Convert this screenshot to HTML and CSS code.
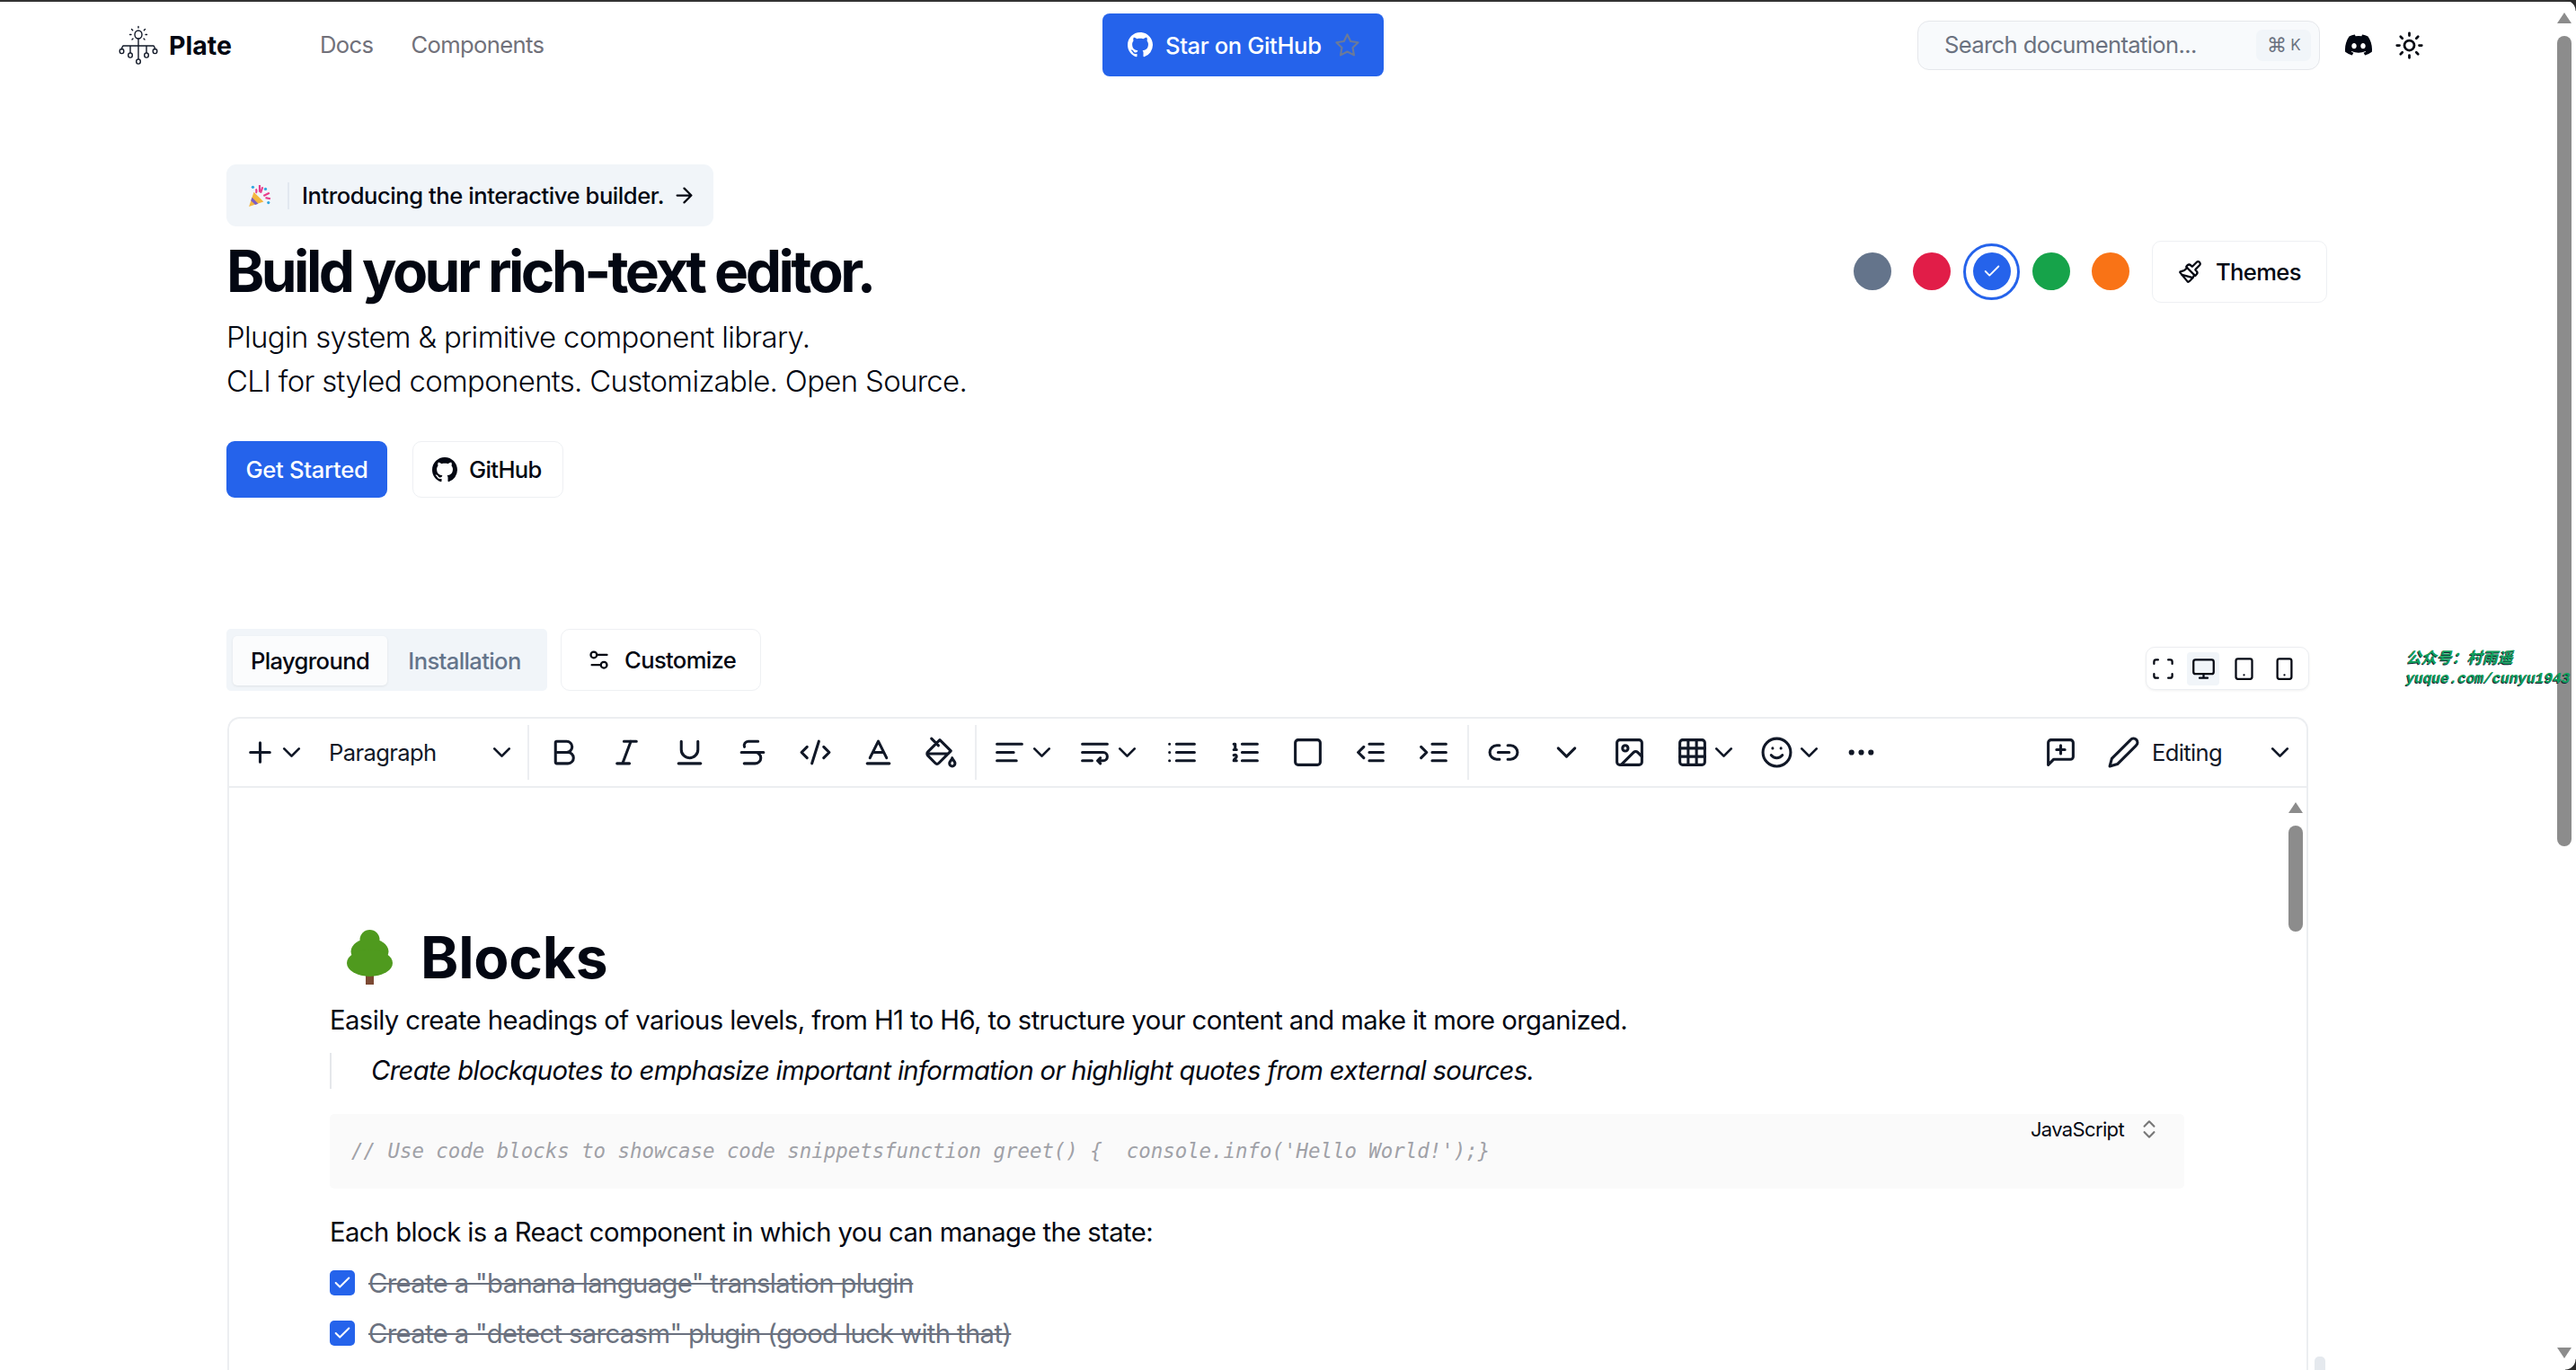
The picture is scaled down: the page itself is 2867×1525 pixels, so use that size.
FILE: index.html
```html
<!DOCTYPE html>
<html lang="en">
<head>
  <meta charset="UTF-8">
  <title>Plate</title>
  <link rel="stylesheet" href="styles.css">
</head>
<body>
  <header class="site-header">
    <div class="brand-nav">
      <a class="brand">
        <svg class="logo" viewBox="0 0 44 44" fill="none" stroke="#111827" stroke-width="1.4" stroke-linecap="round">
          <ellipse cx="22" cy="10.5" rx="4" ry="4.5"/>
          <path d="M22 1.5v1.5M14.5 4.5l1.2 1.2M29.5 4.5l-1.2 1.2M12.5 10.5h1.5M30 10.5h1.5M15 16l1-1M29 16l-1-1"/>
          <path d="M22 15v23M5 23h34M5 23c-1 1-1.500 2-1.500 4M39 23c1 1 1.500 2 1.500 4M13 23v8M31 23v8"/>
          <ellipse cx="3.500" cy="29" rx="2.300" ry="2.600"/>
          <ellipse cx="40.500" cy="29" rx="2.300" ry="2.600"/>
          <ellipse cx="13" cy="33.500" rx="2.300" ry="2.600"/>
          <ellipse cx="31" cy="33.500" rx="2.300" ry="2.600"/>
          <ellipse cx="22" cy="40.500" rx="2.300" ry="2.600"/>
        </svg>
        <span class="brand-name">Plate</span>
      </a>
      <nav class="main-nav">
        <a>Docs</a>
        <a>Components</a>
      </nav>
    </div>
    <a class="star-btn">
      <svg class="gh" viewBox="0 0 16 16" fill="#fff"><path d="M8 0C3.58 0 0 3.58 0 8c0 3.540 2.290 6.530 5.470 7.590.4.070.55-.17.55-.38 0-.19-.01-.82-.01-1.490-2.010.37-2.530-.49-2.690-.94-.09-.23-.48-.94-.82-1.130-.28-.15-.68-.52-.01-.53.63-.01 1.080.58 1.230.82.72 1.210 1.870.87 2.330.66.07-.52.28-.87.51-1.070-1.780-.2-3.640-.89-3.640-3.950 0-.87.31-1.590.82-2.150-.08-.2-.36-1.020.08-2.120 0 0 .67-.21 2.200.82.64-.18 1.320-.27 2-.27.68 0 1.360.09 2 .27 1.530-1.040 2.200-.82 2.200-.82.44 1.100.16 1.920.08 2.120.51.56.82 1.270.82 2.150 0 3.070-1.870 3.750-3.650 3.950.29.25.54.73.54 1.480 0 1.070-.01 1.930-.01 2.200 0 .21.15.46.55.38A8.013 8.013 0 0 0 16 8c0-4.420-3.580-8-8-8z"/></svg>
      <span>Star on GitHub</span>
      <svg class="star" viewBox="0 0 24 24" fill="none" stroke="#6b7a99" stroke-width="1.800" stroke-linejoin="round"><polygon points="12 2 15.090 8.260 22 9.270 17 14.140 18.180 21.020 12 17.770 5.820 21.020 7 14.140 2 9.270 8.910 8.260"/></svg>
    </a>
    <div class="search">
      <span class="search-text">Search documentation...</span>
      <kbd><span class="cmd">⌘</span> K</kbd>
    </div>
    <a class="head-icon">
      <svg class="discord" viewBox="0 0 24 24" fill="#030712"><path d="M20.317 4.370a19.791 19.791 0 0 0-4.885-1.515.074.074 0 0 0-.079.037c-.21.375-.444.864-.608 1.250a18.270 18.270 0 0 0-5.487 0 12.640 12.640 0 0 0-.617-1.250.077.077 0 0 0-.079-.037A19.736 19.736 0 0 0 3.677 4.370a.07.07 0 0 0-.032.027C.533 9.046-.32 13.580.099 18.057a.082.082 0 0 0 .031.057 19.900 19.900 0 0 0 5.993 3.030.078.078 0 0 0 .084-.028 14.090 14.090 0 0 0 1.226-1.994.076.076 0 0 0-.041-.106 13.107 13.107 0 0 1-1.872-.892.077.077 0 0 1-.008-.128 10.200 10.200 0 0 0 .372-.292.074.074 0 0 1 .077-.01c3.928 1.793 8.180 1.793 12.062 0a.074.074 0 0 1 .078.01c.12.098.246.198.373.292a.077.077 0 0 1-.006.127 12.299 12.299 0 0 1-1.873.892.077.077 0 0 0-.041.107c.36.698.772 1.362 1.225 1.993a.076.076 0 0 0 .084.028 19.839 19.839 0 0 0 6.002-3.030.077.077 0 0 0 .032-.054c.5-5.177-.838-9.674-3.549-13.660a.061.061 0 0 0-.031-.03zM8.020 15.330c-1.183 0-2.157-1.085-2.157-2.419 0-1.333.956-2.419 2.157-2.419 1.210 0 2.176 1.096 2.157 2.420 0 1.333-.956 2.418-2.157 2.418zm7.975 0c-1.183 0-2.157-1.085-2.157-2.419 0-1.333.955-2.419 2.157-2.419 1.210 0 2.176 1.096 2.157 2.420 0 1.333-.946 2.418-2.157 2.418Z"/></svg>
    </a>
    <a class="head-icon">
      <svg class="ic" viewBox="0 0 24 24"><circle cx="12" cy="12" r="4"/><path d="M12 2v2M12 20v2M4.930 4.930l1.410 1.410M17.660 17.660l1.410 1.410M2 12h2M20 12h2M6.340 17.660l-1.410 1.410M19.070 4.930l-1.410 1.410"/></svg>
    </a>
  </header>

  <section class="hero">
    <a class="announce">
      <svg class="popper" viewBox="0 0 24 24">
        <path d="M1 23 6 8l10 10z" fill="#f4b63f"/>
        <path d="M4.200 13.500 10.500 20l-3 1.200-4.500-4.400z" fill="#7a5dc7"/>
        <path d="M8 5c1 1 1 3 0 4M12 1v7M15 3l-2 6M22 9l-6 3M23 15l-5-1" stroke="#e83e8c" stroke-width="2" fill="none"/>
        <circle cx="18" cy="5" r="1.500" fill="#2fa7e0"/>
        <circle cx="21" cy="19" r="1.500" fill="#2fa7e0"/>
        <circle cx="5" cy="3" r="1.500" fill="#2fa7e0"/>
      </svg>
      <span class="announce-sep"></span>
      <span>Introducing the interactive builder.</span>
      <svg class="ic arrow" viewBox="0 0 24 24"><path d="M5 12h14M12 5l7 7-7 7"/></svg>
    </a>
    <div class="title-row">
      <h1>Build your rich-text editor.</h1>
      <div class="themes">
        <span class="swatch slate"></span>
        <span class="swatch rose"></span>
        <span class="swatch-ring">
          <span class="swatch blue">
            <svg viewBox="0 0 24 24" fill="none" stroke="#fff" stroke-width="2" stroke-linecap="round" stroke-linejoin="round"><path d="M20 6 9 17l-5-5"/></svg>
          </span>
        </span>
        <span class="swatch green"></span>
        <span class="swatch orange"></span>
        <a class="btn-outline themes-btn">
          <svg class="ic" viewBox="0 0 24 24"><path d="m14.622 17.897-10.680-2.913"/><path d="M18.376 2.622a1 1 0 1 1 3.002 3.002L17.360 9.643a.5.5 0 0 0 0 .707l.944.944a2.410 2.410 0 0 1 0 3.408l-.944.944a.5.5 0 0 1-.707 0L8.354 7.348a.5.5 0 0 1 0-.707l.944-.944a2.410 2.410 0 0 1 3.408 0l.944.944a.5.5 0 0 0 .707 0z"/><path d="M9 8c-1.804 2.710-3.970 3.460-6.583 3.948a.507.507 0 0 0-.302.819l7.320 8.883a1 1 0 0 0 1.185.204C12.735 20.405 16 16.792 16 15"/></svg>
          <span>Themes</span>
        </a>
      </div>
    </div>
    <p class="lead">Plugin system &amp; primitive component library.<br>CLI for styled components. Customizable. Open Source.</p>
    <div class="hero-actions">
      <a class="btn-primary">Get Started</a>
      <a class="btn-outline github-btn">
        <svg class="gh" viewBox="0 0 16 16" fill="#030712"><path d="M8 0C3.58 0 0 3.58 0 8c0 3.540 2.290 6.530 5.470 7.590.4.070.55-.17.55-.38 0-.19-.01-.82-.01-1.490-2.010.37-2.530-.49-2.690-.94-.09-.23-.48-.94-.82-1.130-.28-.15-.68-.52-.01-.53.63-.01 1.080.58 1.230.82.72 1.210 1.870.87 2.330.66.07-.52.28-.87.51-1.070-1.780-.2-3.640-.89-3.640-3.950 0-.87.31-1.590.82-2.150-.08-.2-.36-1.020.08-2.120 0 0 .67-.21 2.200.82.64-.18 1.320-.27 2-.27.68 0 1.360.09 2 .27 1.530-1.040 2.200-.82 2.200-.82.44 1.100.16 1.920.08 2.120.51.56.82 1.270.82 2.150 0 3.070-1.870 3.750-3.650 3.950.29.25.54.73.54 1.480 0 1.070-.01 1.930-.01 2.200 0 .21.15.46.55.38A8.013 8.013 0 0 0 16 8c0-4.420-3.580-8-8-8z"/></svg>
        <span>GitHub</span>
      </a>
    </div>
  </section>

  <section class="playground">
    <div class="tabs-row">
      <div class="tabs">
        <a class="tab active">Playground</a>
        <a class="tab">Installation</a>
      </div>
      <a class="btn-outline customize-btn">
        <svg class="ic" viewBox="0 0 24 24"><path d="M20 7h-9M14 17H5"/><circle cx="17" cy="17" r="3"/><circle cx="7" cy="7" r="3"/></svg>
        <span>Customize</span>
      </a>
      <div class="viewport-switch">
        <a class="vp"><svg class="ic" viewBox="0 0 24 24"><path d="M3 7V5a2 2 0 0 1 2-2h2M17 3h2a2 2 0 0 1 2 2v2M21 17v2a2 2 0 0 1-2 2h-2M7 21H5a2 2 0 0 1-2-2v-2"/></svg></a>
        <a class="vp active"><svg class="ic" viewBox="0 0 24 24"><rect x="2" y="3" width="20" height="14" rx="2"/><path d="M8 21h8M12 17v4"/></svg></a>
        <a class="vp"><svg class="ic" viewBox="0 0 24 24"><rect x="4" y="2" width="16" height="20" rx="2"/><path d="M12 18h.01"/></svg></a>
        <a class="vp"><svg class="ic" viewBox="0 0 24 24"><rect x="5" y="2" width="14" height="20" rx="2"/><path d="M12 18h.01"/></svg></a>
      </div>
    </div>

    <div class="editor">
      <div class="toolbar">
        <div class="tb-group w-insert">
          <svg class="ic" viewBox="0 0 24 24"><path d="M5 12h14M12 5v14"/></svg>
          <svg class="ic chev" viewBox="0 0 24 24"><path d="m6 9 6 6 6-6"/></svg>
        </div>
        <div class="tb-select">
          <span>Paragraph</span>
          <svg class="ic chev" viewBox="0 0 24 24"><path d="m6 9 6 6 6-6"/></svg>
        </div>
        <span class="tb-sep"></span>
        <div class="tb-btn"><svg class="ic" viewBox="0 0 24 24"><path d="M6 12h9a4 4 0 0 1 0 8H7a1 1 0 0 1-1-1V5a1 1 0 0 1 1-1h7a4 4 0 0 1 0 8"/></svg></div>
        <div class="tb-btn"><svg class="ic" viewBox="0 0 24 24"><path d="M19 4h-9M14 20H5M15 4 9 20"/></svg></div>
        <div class="tb-btn"><svg class="ic" viewBox="0 0 24 24"><path d="M6 4v6a6 6 0 0 0 12 0V4M4 20h16"/></svg></div>
        <div class="tb-btn"><svg class="ic" viewBox="0 0 24 24"><path d="M16 4H9a3 3 0 0 0-2.830 4M14 12a4 4 0 0 1 0 8H6M4 12h16"/></svg></div>
        <div class="tb-btn"><svg class="ic" viewBox="0 0 24 24"><path d="m18 16 4-4-4-4M6 8l-4 4 4 4M14.500 4l-5 16"/></svg></div>
        <div class="tb-btn"><svg class="ic" viewBox="0 0 24 24"><path d="M4 20h16M6 16l6-12 6 12M8 12h8"/></svg></div>
        <div class="tb-btn"><svg class="ic" viewBox="0 0 24 24"><path d="m19 11-8-8-8.600 8.600a2 2 0 0 0 0 2.800l5.200 5.200c.8.8 2 .8 2.800 0L19 11ZM5 2l5 5M2 13h15M22 20a2 2 0 1 1-4 0c0-1.600 1.700-2.400 2-4 .3 1.600 2 2.400 2 4Z"/></svg></div>
        <span class="tb-sep"></span>
        <div class="tb-group w-align">
          <svg class="ic" viewBox="0 0 24 24"><path d="M21 6H3M15 12H3M17 18H3"/></svg>
          <svg class="ic chev" viewBox="0 0 24 24"><path d="m6 9 6 6 6-6"/></svg>
        </div>
        <div class="tb-group w-wrap">
          <svg class="ic" viewBox="0 0 24 24"><path d="M3 6h18M3 12h15a3 3 0 1 1 0 6h-4M16 16l-2 2 2 2M3 18h7"/></svg>
          <svg class="ic chev" viewBox="0 0 24 24"><path d="m6 9 6 6 6-6"/></svg>
        </div>
        <div class="tb-btn"><svg class="ic" viewBox="0 0 24 24"><path d="M8 6h13M8 12h13M8 18h13M3 6h.01M3 12h.01M3 18h.01"/></svg></div>
        <div class="tb-btn"><svg class="ic" viewBox="0 0 24 24"><path d="M10 6h11M10 12h11M10 18h11M4 6h1v4M4 10h2M6 18H4c0-1 2-2 2-3s-1-1.500-2-1"/></svg></div>
        <div class="tb-btn"><svg class="ic" viewBox="0 0 24 24"><rect x="3" y="3" width="18" height="18" rx="2"/></svg></div>
        <div class="tb-btn"><svg class="ic" viewBox="0 0 24 24"><path d="M7 8l-4 4 4 4M21 12H11M21 6H11M21 18H11"/></svg></div>
        <div class="tb-btn"><svg class="ic" viewBox="0 0 24 24"><path d="M3 8l4 4-4 4M21 12H11M21 6H11M21 18H11"/></svg></div>
        <span class="tb-sep"></span>
        <div class="tb-btn"><svg class="ic" viewBox="0 0 24 24"><path d="M9 17H7A5 5 0 0 1 7 7h2M15 7h2a5 5 0 1 1 0 10h-2M8 12h8"/></svg></div>
        <div class="tb-btn"><svg class="ic" viewBox="0 0 24 24"><path d="m6 9 6 6 6-6"/></svg></div>
        <div class="tb-btn"><svg class="ic" viewBox="0 0 24 24"><rect x="3" y="3" width="18" height="18" rx="2"/><circle cx="9" cy="9" r="2"/><path d="m21 15-3.086-3.086a2 2 0 0 0-2.828 0L6 21"/></svg></div>
        <div class="tb-group w-table">
          <svg class="ic" viewBox="0 0 24 24"><rect x="3" y="3" width="18" height="18" rx="2"/><path d="M3 9h18M3 15h18M9 3v18M15 3v18"/></svg>
          <svg class="ic chev" viewBox="0 0 24 24"><path d="m6 9 6 6 6-6"/></svg>
        </div>
        <div class="tb-group w-emoji">
          <svg class="ic" viewBox="0 0 24 24"><circle cx="12" cy="12" r="10"/><path d="M8 14s1.500 2 4 2 4-2 4-2M9 9h.01M15 9h.01"/></svg>
          <svg class="ic chev" viewBox="0 0 24 24"><path d="m6 9 6 6 6-6"/></svg>
        </div>
        <div class="tb-btn"><svg class="ic" viewBox="0 0 24 24"><circle cx="5" cy="12" r="1"/><circle cx="12" cy="12" r="1"/><circle cx="19" cy="12" r="1"/></svg></div>
        <div class="tb-right">
          <div class="tb-btn"><svg class="ic" viewBox="0 0 24 24"><path d="M21 15a2 2 0 0 1-2 2H7l-4 4V5a2 2 0 0 1 2-2h14a2 2 0 0 1 2 2zM12 7v6M9 10h6"/></svg></div>
          <div class="tb-mode">
            <svg class="ic" viewBox="0 0 24 24"><path d="M17 3a2.850 2.830 0 1 1 4 4L7.500 20.500 2 22l1.500-5.500Z"/></svg>
            <span>Editing</span>
            <svg class="ic chev" viewBox="0 0 24 24"><path d="m6 9 6 6 6-6"/></svg>
          </div>
        </div>
      </div>

      <div class="doc">
        <h2 class="doc-title">
          <svg class="tree" viewBox="0 0 51 61">
            <rect x="21" y="46" width="9" height="15" fill="#7c4a33"/>
            <ellipse cx="25.500" cy="11" rx="11" ry="11" fill="#4f9a1e"/>
            <ellipse cx="25.500" cy="24" rx="21" ry="14" fill="#4f9a1e"/>
            <ellipse cx="25.500" cy="37" rx="25.500" ry="15" fill="#4f9a1e"/>
          </svg>
          <span>Blocks</span>
        </h2>
        <p class="doc-p">Easily create headings of various levels, from H1 to H6, to structure your content and make it more organized.</p>
        <blockquote>Create blockquotes to emphasize important information or highlight quotes from external sources.</blockquote>
        <div class="code-block">
          <code>// Use code blocks to showcase code snippetsfunction greet() {  console.info('Hello World!');}</code>
          <span class="lang">JavaScript
            <svg class="ic" viewBox="0 0 24 24"><path d="m7 15 5 5 5-5M7 9l5-5 5 5"/></svg>
          </span>
        </div>
        <p class="doc-p after-code">Each block is a React component in which you can manage the state:</p>
        <div class="todo">
          <span class="check"><svg viewBox="0 0 24 24" fill="none" stroke="#fff" stroke-width="2.200" stroke-linecap="round" stroke-linejoin="round"><path d="M20 6 9 17l-5-5"/></svg></span>
          <s>Create a "banana language" translation plugin</s>
        </div>
        <div class="todo">
          <span class="check"><svg viewBox="0 0 24 24" fill="none" stroke="#fff" stroke-width="2.200" stroke-linecap="round" stroke-linejoin="round"><path d="M20 6 9 17l-5-5"/></svg></span>
          <s>Create a "detect sarcasm" plugin (good luck with that)</s>
        </div>
      </div>

      <!-- editor scrollbar -->
      <div class="editor-scroll">
        <span class="arrow-up"></span>
        <span class="thumb"></span>
      </div>
    </div>
  </section>

  <!-- window edge, page scrollbar, watermark -->
  <div class="window-line"></div>
  <div class="corner top"></div>
  <div class="corner bottom"></div>
  <div class="page-scroll">
    <span class="arrow-up"></span>
    <span class="thumb"></span>
    <span class="arrow-down"></span>
  </div>
  <span class="scroll-blob"></span>
  <div class="watermark"><span class="wm-cjk">公众号：村雨遥</span><br>yuque.com/cunyu1943</div>
</body>
</html>
```

FILE: styles.css
```css
* {
  box-sizing: border-box;
}
html, body {
  height: 1525px;
  overflow: hidden;
}
body {
  margin: 0;
  position: relative;
  background: #fff;
  color: #030712;
  font-family: Inter, "Noto Sans", sans-serif;
  font-size: 25.6px;
  letter-spacing: -0.64px;
}
.ic {
  width: 29px;
  height: 29px;
  flex: none;
  fill: none;
  stroke: currentColor;
  stroke-width: 2;
  stroke-linecap: round;
  stroke-linejoin: round;
}

/* Header */
.site-header {
  height: 100px;
  display: flex;
  align-items: center;
  padding-left: 132px;
}
.brand-nav {
  width: 1095px;
  display: flex;
  align-items: center;
}
.brand {
  width: 224px;
  display: flex;
  align-items: center;
  gap: 12px;
}
.logo {
  width: 44px;
  height: 44px;
}
.brand-name {
  font-size: 28.5px;
  font-weight: 700;
  letter-spacing: 0;
}
.main-nav {
  display: flex;
  gap: 42px;
  padding-bottom: 2px;
  color: #71717a;
}
.star-btn {
  width: 313px;
  height: 70px;
  display: flex;
  align-items: center;
  padding-left: 28px;
  gap: 14px;
  background: #2563eb;
  color: #fff;
  font-weight: 500;
  letter-spacing: -0.38px;
  border-radius: 8px;
}
.star-btn .gh {
  width: 28px;
  height: 28px;
}
.star {
  width: 29px;
  height: 29px;
}
.search {
  width: 448px;
  height: 55px;
  margin-left: 594px;
  margin-right: 14px;
  padding: 0 9px 0 29px;
  display: flex;
  align-items: center;
  justify-content: space-between;
  background: #f8fafc;
  border: 1.500px solid #e5e7eb;
  border-radius: 13px;
  color: #6b7280;
}
.search-text {
  padding-bottom: 2px;
}
kbd {
  width: 61px;
  height: 35px;
  display: flex;
  align-items: center;
  justify-content: center;
  gap: 5px;
  background: #f1f5f9;
  border-radius: 7px;
  color: #6b7280;
  font-family: Inter, sans-serif;
  font-size: 17px;
}
.cmd {
  font-family: "DejaVu Sans", sans-serif;
  font-size: 22px;
}
.head-icon {
  display: flex;
  align-items: center;
  justify-content: center;
  width: 57px;
}
.head-icon .ic {
  width: 33px;
  height: 33px;
}
.discord {
  width: 30px;
  height: 30px;
}

/* Hero */
.hero {
  padding: 83px 277px 0 252px;
}
.announce {
  width: 542px;
  height: 69px;
  display: flex;
  align-items: center;
  padding-left: 24px;
  background: #f1f5f9;
  border-radius: 11px;
  font-weight: 500;
  letter-spacing: -0.45px;
  white-space: nowrap;
}
.popper {
  width: 26px;
  height: 26px;
}
.announce-sep {
  width: 2px;
  height: 30px;
  margin: 0 14px 0 18px;
  background: #e2e8f0;
}
.arrow {
  width: 27px;
  height: 27px;
  margin-left: 9px;
}
.title-row {
  height: 74px;
  margin-top: 13px;
  display: flex;
  align-items: center;
  justify-content: space-between;
}
h1 {
  margin: 0;
  font-size: 64px;
  font-weight: 700;
  letter-spacing: -3.550px;
  line-height: 74px;
}
.themes {
  display: flex;
  align-items: center;
}
.swatch {
  width: 42px;
  height: 42px;
  border-radius: 50%;
  margin-right: 24px;
  display: flex;
  align-items: center;
  justify-content: center;
}
.swatch svg {
  width: 22px;
  height: 22px;
}
.slate { background: #64748b; }
.rose { background: #e11d48; margin-right: 14px; }
.blue { background: #2563eb; margin: 0; }
.green { background: #16a34a; }
.orange { background: #f97316; margin-right: 25px; }
.swatch-ring {
  width: 63px;
  height: 63px;
  margin-right: 14px;
  border: 3.500px solid #2563eb;
  border-radius: 50%;
  display: flex;
  align-items: center;
  justify-content: center;
}
.btn-outline {
  display: flex;
  align-items: center;
  background: #fff;
  border: 1.500px solid #eef0f3;
  border-radius: 10px;
  font-weight: 500;
}
.themes-btn {
  width: 195px;
  height: 69px;
  padding-left: 28px;
  gap: 15px;
}
.themes-btn .ic {
  width: 27px;
  height: 27px;
}
.lead {
  margin: 12px 0 0;
  font-size: 32.900px;
  font-weight: 300;
  letter-spacing: -0.650px;
  line-height: 49px;
}
.hero-actions {
  margin-top: 42px;
  display: flex;
  gap: 28px;
}
.btn-primary {
  width: 179px;
  height: 63px;
  display: flex;
  align-items: center;
  justify-content: center;
  background: #2563eb;
  color: #fff;
  font-weight: 500;
  letter-spacing: -0.3px;
  border-radius: 9px;
}
.github-btn {
  width: 168px;
  height: 63px;
  padding-left: 21px;
  gap: 13px;
}
.github-btn .gh {
  width: 28px;
  height: 28px;
}

/* Playground */
.playground {
  padding: 146px 297px 0 252px;
}
.tabs-row {
  height: 70px;
  display: flex;
  gap: 15px;
}
.tabs {
  width: 357px;
  height: 69px;
  padding: 8px 6px 8px 7px;
  display: flex;
  background: #f1f5f9;
  border-radius: 5px;
  font-weight: 500;
  color: #64748b;
}
.tab {
  height: 55px;
  display: flex;
  align-items: center;
  justify-content: center;
  width: 172px;
}
.tab.active {
  background: #fbfcfd;
  color: #030712;
  border-radius: 5px;
  box-shadow: 0 1px 3px rgba(0, 0, 0, 0.08);
}
.customize-btn {
  width: 223px;
  height: 69px;
  padding-left: 28px;
  gap: 15px;
}
.customize-btn .ic {
  width: 27px;
  height: 27px;
}
.viewport-switch {
  width: 182px;
  height: 48px;
  margin: 20px 0 0 auto;
  display: flex;
  align-items: center;
  gap: 9.300px;
  background: #fff;
  border: 1.500px solid #eceef1;
  border-radius: 10px;
  box-shadow: 0 1px 3px rgba(0, 0, 0, 0.06);
}
.vp {
  width: 36px;
  height: 37px;
  display: flex;
  align-items: center;
  justify-content: center;
  border-radius: 4px;
}
.vp .ic {
  width: 27px;
  height: 27px;
}
.vp.active {
  background: #f1f5f9;
}

.editor {
  position: relative;
  width: 2316px;
  height: 727px;
  margin-top: 28px;
  margin-left: 1px;
  border: 2px solid #eceef1;
  border-bottom: none;
  border-radius: 14px 14px 0 0;
  overflow: hidden;
}
.toolbar {
  height: 77px;
  padding-left: 8px;
  display: flex;
  align-items: center;
  border-bottom: 2px solid #eceef1;
  color: #111827;
}
.toolbar .ic {
  width: 37px;
  height: 37px;
}
.toolbar .chev {
  width: 33px;
  height: 33px;
}
.tb-btn, .tb-group {
  height: 60px;
  display: flex;
  align-items: center;
  justify-content: center;
  flex: none;
}
.tb-btn {
  width: 70px;
}
.tb-group {
  gap: 1px;
}
.w-insert { width: 85px; gap: 0; }
.w-align { width: 101px; }
.w-wrap { width: 89px; }
.w-table { width: 104px; gap: 0; }
.w-emoji { width: 84px; }
.tb-select {
  width: 236px;
  padding: 0 9px 0 18px;
  display: flex;
  align-items: center;
  justify-content: space-between;
}
.tb-sep {
  width: 2px;
  height: 61px;
  margin: 0 3px;
  background: #eceef1;
  flex: none;
}
.tb-right {
  margin-left: auto;
  display: flex;
  align-items: center;
}
.tb-right .tb-btn {
  width: 76px;
}
.tb-mode {
  width: 236px;
  padding: 0 13px 0 14px;
  display: flex;
  align-items: center;
  gap: 13px;
}
.tb-mode .chev {
  margin-left: auto;
}

/* Document */
.doc {
  padding: 143px 0 0 112px;
  width: 2176px;
}
.doc-title {
  margin: 0 0 2px;
  height: 90px;
  display: flex;
  align-items: center;
  gap: 31px;
  padding-left: 19px;
  font-size: 64px;
  font-weight: 700;
  letter-spacing: -0.2px;
}
.tree {
  width: 51px;
  height: 61px;
}
.doc-p {
  margin: 0;
  font-size: 29.250px;
  letter-spacing: -0.590px;
  line-height: 48px;
}
blockquote {
  margin: 12px 0 0;
  padding-left: 44px;
  border-left: 2px solid #e5e7eb;
  font-size: 29.250px;
  font-style: italic;
  letter-spacing: -0.680px;
  line-height: 40px;
}
.code-block {
  position: relative;
  height: 83px;
  margin-top: 28px;
  padding: 24px 24px 0;
  background: #fafafa;
  border-radius: 5px;
}
code {
  font-family: "DejaVu Sans Mono", monospace;
  font-size: 22.400px;
  font-style: italic;
  letter-spacing: 0;
  color: #a0a1a7;
  white-space: pre;
}
.lang {
  position: absolute;
  top: 3px;
  right: 26px;
  display: flex;
  align-items: center;
  gap: 15px;
  font-size: 22px;
  height: 28px;
}
.lang .ic {
  width: 26px;
  height: 26px;
  color: #777;
}
.after-code {
  margin-top: 25px;
  margin-bottom: 4px;
}
.todo {
  display: flex;
  align-items: center;
  height: 56px;
  gap: 15px;
  font-size: 29.250px;
  color: #6b7280;
}
.check {
  width: 28px;
  height: 28px;
  background: #2563eb;
  border-radius: 5px;
  display: flex;
  align-items: center;
  justify-content: center;
}
.check svg {
  width: 22px;
  height: 22px;
}

/* Scrollbars and window edge, drawn over the page */
.editor-scroll {
  position: absolute;
  top: 93px;
  right: 4px;
  width: 16px;
}
.thumb {
  display: block;
  background: #8c8c8c;
  border-radius: 8px;
}
.arrow-up {
  display: block;
  width: 0;
  border-left: 8px solid transparent;
  border-right: 8px solid transparent;
  border-bottom: 12px solid #8c8c8c;
}
.arrow-down {
  display: block;
  width: 0;
  border-left: 8px solid transparent;
  border-right: 8px solid transparent;
  border-top: 12px solid #8c8c8c;
}
.editor-scroll .thumb {
  height: 118px;
  margin-top: 14px;
}
.page-scroll {
  position: absolute;
  top: 14px;
  bottom: 13px;
  right: 5px;
  width: 16px;
  display: flex;
  flex-direction: column;
}
.page-scroll .thumb {
  height: 902px;
  margin-top: 14px;
}
.page-scroll .arrow-down {
  margin-top: auto;
}
.scroll-blob {
  position: absolute;
  left: 2576px;
  top: 1510px;
  width: 12px;
  height: 15px;
  background: #e5e9ee;
  border-radius: 5px 5px 0 0;
}
.window-line {
  position: absolute;
  top: 0;
  left: 0;
  right: 0;
  height: 2px;
  background: #333;
}
.corner {
  position: absolute;
  right: 0;
  width: 12px;
  height: 12px;
  background: radial-gradient(circle at 0 0, transparent 11px, #2b2b2b 12px);
}
.corner.top {
  top: 0;
  background: radial-gradient(circle at 0 100%, transparent 11px, #2b2b2b 12px);
}
.corner.bottom {
  bottom: 0;
}
.watermark {
  position: absolute;
  left: 2678px;
  top: 723px;
  font-family: "Liberation Mono", "Noto Sans CJK SC", monospace;
  font-size: 16px;
  font-weight: 700;
  font-style: italic;
  letter-spacing: 0;
  line-height: 22px;
  color: #12a05c;
  text-shadow: -1px 1px 0 #123;
  white-space: nowrap;
}
.wm-cjk {
  font-size: 17px;
}
```
